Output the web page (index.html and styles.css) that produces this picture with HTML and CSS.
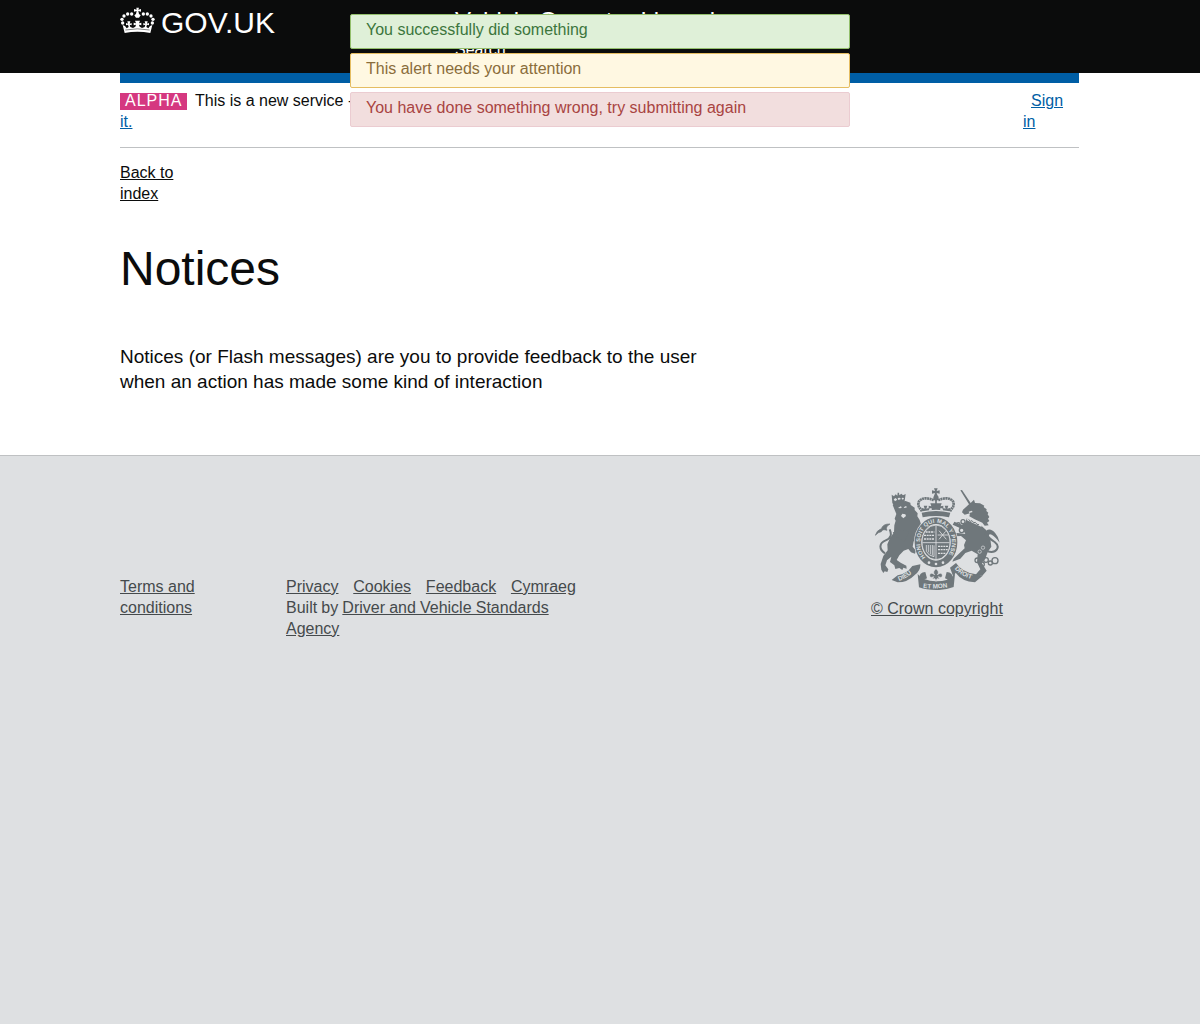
FILE: index.html
```html
<!DOCTYPE html>
<html lang="en">
<head>
<meta charset="utf-8">
<title>Notices</title>
<link rel="stylesheet" href="styles.css">
</head>
<body>
<div class="alerts">
  <p class="alert alert-success">You successfully did something</p>
  <p class="alert alert-warning">This alert needs your attention</p>
  <p class="alert alert-danger">You have done something wrong, try submitting again</p>
</div>
<header class="header">
  <div class="wrap header-inner">
    <a class="logo" href="#">
      <svg class="crown" viewBox="30 22 105 81" aria-hidden="true">
        <g fill="#fff">
          <path d="M79 24h8l-2 6 8-2v8l-8-2 2 9 5 4-5 7h-9l-5-7 5-4 2-9-8 2v-8l8 2z"/>
          <circle cx="65" cy="43" r="5"/><circle cx="53" cy="43" r="5"/><circle cx="42" cy="49" r="5"/><circle cx="36" cy="59" r="5"/><circle cx="38" cy="70" r="5"/>
          <circle cx="100" cy="43" r="5"/><circle cx="112" cy="43" r="5"/><circle cx="123" cy="49" r="5"/><circle cx="129" cy="59" r="5"/><circle cx="127" cy="70" r="5"/>
          <path d="M44 100L38 76L45 79L50 86L56 82L54 75L48 77V70L54 72L52 65H61L59 72L65 70V77L59 75L61 82L69 85L76 81L78 75L71 77V69L78 71L75 63H90L87 71L94 69V77L87 75L89 81L96 85L104 82L106 75L100 77V70L106 72L104 65H113L111 72L117 70V77L111 75L109 82L115 86L120 79L127 76L121 100Q82 93 44 100z"/>
        </g>
        <path d="M46 91Q82 84 119 91" fill="none" stroke="#0b0c0c" stroke-width="1.5"/>
      </svg>
      <span>GOV.UK</span>
    </a>
    <div class="service">
      <a class="service-name" href="#">Vehicle Operator Licensing</a>
      <a class="search" href="#">Search</a>
    </div>
  </div>
</header>
<main class="wrap main">
  <div class="bar"></div>
  <div class="phase">
    <p><strong class="tag">ALPHA</strong><span>This is a new service - your <a href="#">feedback</a> will help us to improve<br><a href="#">it.</a></span></p>
    <p class="sign"><a href="#">Sign in</a></p>
  </div>
  <a class="back" href="#">Back to index</a>
  <h1>Notices</h1>
  <p class="lede">Notices (or Flash messages) are you to provide feedback to the user when an action has made some kind of interaction</p>
</main>
<footer class="footer">
  <div class="wrap footer-inner">
    <a class="terms" href="#">Terms and conditions</a>
    <div class="meta">
      <nav><a href="#">Privacy</a><a href="#">Cookies</a><a href="#">Feedback</a><a href="#">Cymraeg</a></nav>
      <p class="built">Built by <a href="#">Driver and Vehicle Standards Agency</a></p>
    </div>
    <div class="copyright">
      <svg class="arms" viewBox="30 24 375 306" aria-hidden="true">
        <defs>
          <path id="garter" d="M182 232A48 59 0 1 1 244 232"/>
          <path id="dieu" d="M102 303Q130 294 155 265"/>
          <path id="mon" d="M174 323Q213 329 258 320"/>
          <path id="droit" d="M269 266Q292 294 333 300"/>
        </defs>
        <!-- lion -->
        <g fill="#6f777b">
          <path d="M80 44l7 5 5-6 5 4 1-9h4l1 8 6-5 5 5 8-4-3 21-3 7-30 5-4-6z"/>
          <path d="M83 75L93 67L122 63L136 68L137 75L149 83L149 90L158 100L157 109L164 120L168 133L166 150L158 165L165 172L157 185L146 184L143 200L153 212L150 221L138 217L130 207L116 212L103 226L95 240L107 248L124 257L125 266L115 263L112 270L103 264L91 267L88 256L75 246L79 230L66 241L61 256L70 268L67 276L59 274L55 279L49 269L47 252L55 228L68 211L67 193L74 176L87 157L88 136L92 122L89 116L94 102L90 92z"/>
          <path d="M104 151L91 143L78 146L69 137L62 140L63 149L55 151L62 159L58 164L72 168L90 180z" transform="translate(28 6)"/>
        </g>
        <!-- unicorn -->
        <g fill="#6f777b">
          <path d="M286 31l5-1 26 39 10-10 3 10 15 1 13 7-2 4 9 7-1 5 6 5-2 5 5 8-4 5 4 7-7 5 5 8-12 1-7-9-23-10-16-9 2-9-16 4-8-7 3-8 18-16z"/>
          <path d="M306 114L350 138L364 151L376 177L379 200L368 216L361 236L350 248L365 272L352 287L331 285L346 268L336 247L338 223L320 212L301 219L286 236L262 245L266 236L284 219L299 205L297 195L303 181L288 168L270 169L266 158L285 160L301 162L295 151L280 142L263 134L268 125L290 134L300 130z"/>
          <path d="M404 188Q391 170 380 164Q370 159 371 172Q353 166 363 153Q376 142 391 160Q401 171 404 188z"/>
        </g>
        <!-- crown -->
        <g fill="#6f777b">
          <path d="M173 112L170 98Q213 88 256 98L252 112Q213 104 173 112zM207 25h11l-3 8 9-2v10l-9-2 3 9h-11l3-9-9 2V31l9 2z"/>
          <circle cx="213" cy="54" r="8"/>
          <path d="M172 94l-3-11 10 3-3-9h11l-3 9 10-3-2 8 9-2-2-5-8 2v-9l8 2-3-9h34l-3 9 8-2v9l-8-2-2 5 9 2-2-8 10 3-3-9h11l-3 9 10-3-3 11Q213 84 172 94z"/>
        </g>
        <g fill="none" stroke="#6f777b">
          <path d="M171 94L162 81C153 59 177 47 206 61M255 94L264 81C273 59 249 47 220 61" stroke-width="8" stroke-dasharray="6 1.5"/>
          <path d="M213 60V80" stroke-width="5"/>
          <path d="M60 220C40 207 43 188 62 181C80 174 80 162 74 148M367 214C396 222 407 200 389 186C374 176 364 170 366 160" stroke-width="6"/>
          <path d="M31 166Q35 151 49 146Q54 131 75 132Q60 140 66 151Q52 146 49 155Q40 156 31 166z" fill="#6f777b" stroke-width="2"/>
          <!-- garter and shield -->
          <ellipse cx="213" cy="187" rx="66" ry="77" fill="#dee0e2" stroke="none"/>
          <ellipse cx="213" cy="187" rx="54" ry="65" stroke-width="20"/>
          <ellipse cx="213" cy="187" rx="42" ry="52" fill="#6f777b" stroke="#dee0e2" stroke-width="2.5"/>
          <path d="M213 136V238M172 188H254" stroke="#dee0e2" stroke-width="2.5"/>
          <path d="M182 156h26M177 166h31M177 177h31M219 199h31M219 209h29M219 220h22" stroke="#dee0e2" stroke-width="4" stroke-dasharray="6 2"/>
          <path d="M222 152l22 26M222 178l20-24M218 165h32M184 195v19q7 14 23 16V196M190 195v22M196 195v28M202 195v31" stroke="#dee0e2" stroke-width="2.5"/>
        </g>
        <!-- ribbons -->
        <g fill="#6f777b">
          <path d="M80 300L98 286Q125 282 142 258L166 253Q167 272 150 284Q128 307 98 307zM158 282Q174 304 213 304Q252 304 270 281L266 321Q239 331 213 330Q184 330 162 322z"/>
          <path d="M255 263L273 249Q291 277 330 282L353 287L330 307Q290 304 272 278L265 290z"/>
          <path d="M181 276q-19 2-17 16l10 8 12-5zM245 276q19 2 17 16l-10 8-12-5z"/>
          <path d="M213 266q12 10 4 18 14-10 15 2 0 10-12 4l4 7-8-1-3 8-3-8-8 1 4-7q-12 6-12-4 1-12 15-2-8-8 4-18z" stroke="#dee0e2" stroke-width="2"/>
        </g>
        <g fill="#dee0e2">
          <path d="M99 84l8-5 4 3-5 3zM116 82l7-4 3 4-7 2zM112 101l9 2 2 5-8 7-7-7z"/>
          <path d="M311 95l9-3 3 4-10 3zM307 112l40 19 3 10-44-20z"/>
          <circle cx="192" cy="248" r="4"/><circle cx="213" cy="252" r="4"/><circle cx="234" cy="248" r="4"/>
          <path d="M86 58l6-4 5 5-7 5zM98 54l6-1 4 4-8 3zM111 53l6 1-3 5-4-2z"/>
        </g>
        <path d="M311 118l5 6 5-2 5 6 5-1 5 6 6 1" fill="none" stroke="#6f777b" stroke-width="3"/>
        <!-- chain -->
        <g fill="none" stroke="#6f777b" stroke-width="4">
          <circle cx="337" cy="241" r="7"/><circle cx="351" cy="253" r="7"/><circle cx="363" cy="240" r="7"/><circle cx="376" cy="249" r="6"/><circle cx="390" cy="242" r="9"/>
          <circle cx="294" cy="125" r="6"/><circle cx="280" cy="133" r="5"/><circle cx="290" cy="151" r="7" fill="#dee0e2"/>
        </g>
        <g fill="none" stroke="#dee0e2" stroke-width="2"><circle cx="354" cy="203" r="5"/><circle cx="344" cy="215" r="5"/></g>
        <g class="motto">
          <text class="motto-ring"><textPath href="#garter">HONI SOIT QUI MAL Y PENSE</textPath></text>
          <text><textPath href="#dieu">DIEU</textPath></text>
          <text><textPath href="#mon">ET MON</textPath></text>
          <text><textPath href="#droit">DROIT</textPath></text>
        </g>
      </svg>
      <a href="#">© Crown copyright</a>
    </div>
  </div>
</footer>
</body>
</html>
```
FILE: styles.css
```css
* { box-sizing: border-box; }
body {
  margin: 0;
  min-height: 1024px;
  display: flex;
  flex-direction: column;
  background: #fff;
  color: #0b0c0c;
  font: 16px/21px "Liberation Sans", Arial, Helvetica, sans-serif;
}
p, h1 { margin: 0; }
.wrap { width: 959px; margin-left: 120px; }
.alerts {
  position: absolute;
  z-index: 2;
  top: 14px;
  left: 350px;
  width: 500px;
}
.alert {
  height: 35px;
  margin-bottom: 4px;
  padding: 4px 15px;
  border: 1px solid;
  border-radius: 2px;
}
.alert-success { background: #dff0d8; border-color: #93bf6c; color: #3c763d; }
.alert-warning { background: #fff8e2; border-color: #e5bd62; color: #8a6d3b; }
.alert-danger { background: #f2dede; border-color: #ebccd1; color: #a94442; }
.header { height: 73px; background: #0b0c0c; }
.header a { color: #fff; text-decoration: none; }
.header-inner { display: flex; }
.logo {
  display: flex;
  width: 335px;
  padding-top: 7px;
  font-size: 30px;
  line-height: 31px;
}
.crown { width: 35px; height: 27px; margin-right: 6px; }
.service { display: flex; flex-direction: column; padding-top: 6px; }
.service-name { font-size: 24px; line-height: 30px; }
.search { padding-top: 3px; }
.bar { height: 10px; background: #005ea5; }
.phase {
  display: flex;
  justify-content: space-between;
  height: 65px;
  padding-top: 7px;
  border-bottom: 1px solid #bfc1c3;
}
.phase a { color: #005ea5; }
.tag {
  display: inline-block;
  width: 67px;
  height: 17px;
  margin-right: 8px;
  padding-left: 5px;
  background: #d53880;
  color: #fff;
  font-weight: 400;
  line-height: 16px;
  letter-spacing: 1px;
}
.sign { width: 56px; text-indent: 8px; }
.back { display: block; width: 75px; margin-top: 14px; color: #0b0c0c; }
h1 { margin-top: 40px; font-size: 48px; font-weight: 400; line-height: 50px; }
.lede { width: 600px; margin-top: 50px; font-size: 19px; line-height: 25px; }
.footer {
  flex: 1;
  margin-top: 61px;
  border-top: 1px solid #bfc1c3;
  background: #dee0e2;
  color: #454a4c;
}
.footer a { color: #454a4c; }
.footer-inner { display: flex; align-items: flex-start; }
.terms { width: 100px; margin: 120px 66px 0 0; }
.meta { width: 300px; margin-top: 120px; }
.meta nav { display: flex; gap: 14.8px; }
.built { word-spacing: -0.3px; }
.copyright { width: 132px; margin: 32px 0 0 285px; white-space: nowrap; }
.arms { display: block; width: 125px; height: 102px; margin: 0 0 8px 4px; }
.motto { fill: #dee0e2; font: bold 19px "Liberation Sans", Arial, sans-serif; }
.motto-ring { font-size: 17px; letter-spacing: 0.6px; }
```
